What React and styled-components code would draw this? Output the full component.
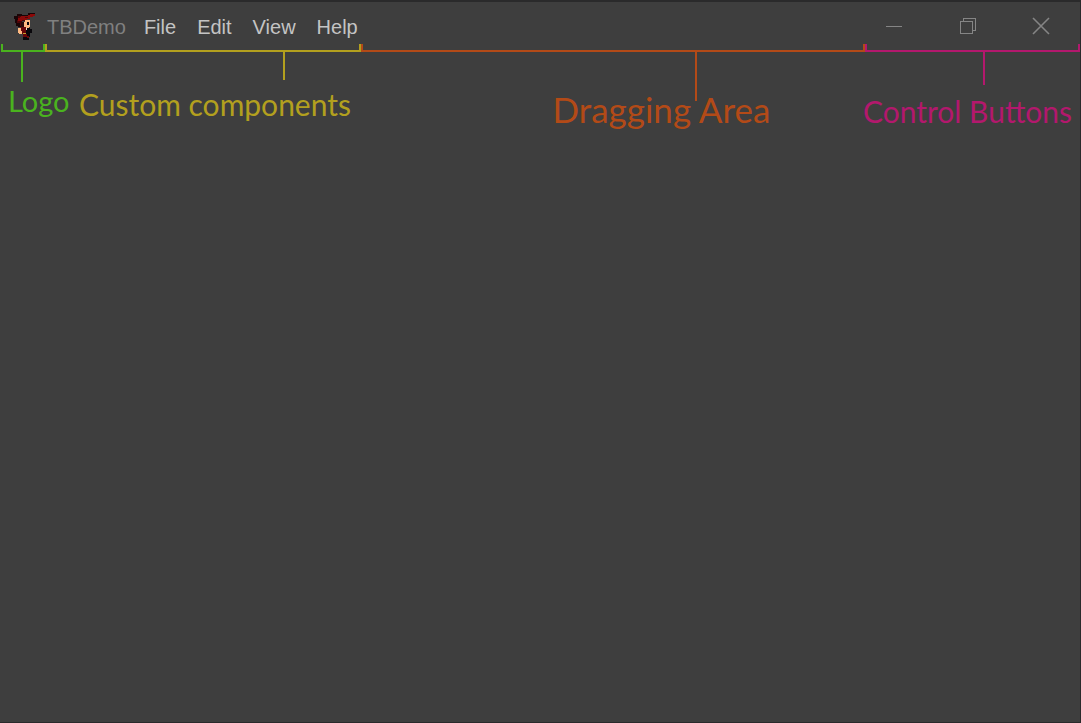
import React from "react";
import styled, { createGlobalStyle } from "styled-components";

const GlobalStyle = createGlobalStyle`
  * { box-sizing: border-box; }
  body { margin: 0; background: #3e3e3e; }
`;

const Window = styled.main`
  min-height: 100vh;
  background: #3e3e3e;
  border: solid #2a2a2b;
  border-width: 2px 1px 1px 0;
  font-family: "Liberation Sans", Arial, sans-serif;
`;

const zoneColumns = "44px 316px 1fr 215px";

const TitleBar = styled.header`
  display: grid;
  grid-template-columns: ${zoneColumns};
  height: 42px;
  padding-left: 1px;
  align-items: stretch;
`;

const LogoSlot = styled.div`
  display: flex;
  align-items: center;
  padding: 8px 0 0 13px;
`;

const Components = styled.div`
  display: flex;
  align-items: center;
  padding: 8px 0 0 2px;
  gap: 18px;
`;

const AppName = styled.span`
  font-size: 20px;
  line-height: 24px;
  color: #808080;
`;

const Menu = styled.nav`
  display: flex;
  gap: 21px;
`;

const MenuButton = styled.button`
  padding: 0;
  border: 0;
  background: none;
  font: inherit;
  font-size: 20px;
  line-height: 24px;
  color: #c4c4c4;
`;

const DragArea = styled.div``;

const Controls = styled.div`
  display: grid;
  grid-template-columns: repeat(3, 1fr);
  margin-left: -7px;
  margin-right: 2px;
`;

const ControlButton = styled.button`
  display: flex;
  align-items: center;
  justify-content: center;
  padding: 6px 0 0;
  border: 0;
  background: none;
  color: #858585;
`;

const Legend = styled.section`
  display: grid;
  grid-template-columns: ${zoneColumns};
  padding-left: 1px;
`;

const Zone = styled.div`
  color: ${(p) => p.$color};
`;

const Bracket = styled.div`
  height: 8px;
  border: 2px solid currentColor;
  border-top: 0;
`;

const Stem = styled.div`
  width: 2px;
  height: ${(p) => p.$length}px;
  margin-left: ${(p) => p.$at};
  background: currentColor;
`;

const Label = styled.p`
  margin: ${(p) => p.$gap}px 0 0 ${(p) => p.$indent};
  font-family: Lato, "Open Sans", sans-serif;
  font-size: ${(p) => p.$size}px;
  line-height: 32px;
  white-space: nowrap;
`;

const Sprite = () => (
  <svg width="22" height="28" viewBox="0 0 22 28" shapeRendering="crispEdges" role="img" aria-label="TBDemo logo">
    <path fill="#1a0507" d="M3 1h5v2h-5zM0 3h4v3h-4zM1 6h3v4h-3zM2 10h4v3h-4zM4 13h4v1h-4zM8 2h6v1h-6zM14 0h7v3h-7z" />
    <path fill="#4d0508" d="M4 3h5v4h-5zM3 7h5v3h-5zM6 10h3v3h-3z" />
    <path fill="#8b0909" d="M7 3h7v-1h2v-1h5v2h-2v1h-3v2h-3v1h-4v1h-5v-3h2z" />
    <path fill="#4d0508" d="M11 4h3v1h-3zM8 7h5v1h-5z" />
    <path fill="#2a0c0c" d="M7 9h3v5h-3z" />
    <path fill="#ffba82" d="M11 7h5v7h-1v1h-5v-6h1z" />
    <path fill="#0a0a12" d="M13 9h2v3h-2z" />
    <path fill="#680709" d="M7 14h5v7h-4v-3h-1z" />
    <path fill="#09070b" d="M12 15h4v1h2v4h-2v2h-4z" />
    <path fill="#ffba82" d="M4 15h3v3h1v3h-3v-1h-1z" />
    <path fill="#f4dccb" d="M12 15h1v2h-1z" />
    <path fill="#c5a12c" d="M9 20h3v1h-3z" />
    <path fill="#09070b" d="M9 22h7v2h-1v3h-6z" />
    <path fill="#680709" d="M9 21h4v3h-4zM13 23h2v2h-2z" />
  </svg>
);

const MinimizeIcon = () => (
  <svg width="18" height="18" viewBox="0 0 18 18" fill="none" stroke="currentColor" shapeRendering="crispEdges">
    <path d="M0 9.500h16" />
  </svg>
);

const RestoreIcon = () => (
  <svg width="18" height="18" viewBox="0 0 18 18" fill="none" stroke="currentColor" shapeRendering="crispEdges">
    <path d="M1.500 4.500h12v12h-12zM4.500 4V1.500h12v12H14" />
  </svg>
);

const CloseIcon = () => (
  <svg width="18" height="18" viewBox="0 0 18 18" fill="none" stroke="currentColor" strokeWidth="1.600">
    <path d="M1 1l16 16M17 1L1 17" />
  </svg>
);

const menus = ["File", "Edit", "View", "Help"];

const controls = [
  { name: "Minimize", Icon: MinimizeIcon },
  { name: "Restore", Icon: RestoreIcon },
  { name: "Close", Icon: CloseIcon },
];

const zones = [
  { text: "Logo", color: "#4ab31e", at: "20px", length: 30, indent: "7px", gap: 3, size: 29 },
  { text: "Custom components", color: "#b3a01e", at: "238px", length: 28, indent: "34px", gap: 8, size: 30 },
  { text: "Dragging Area", color: "#b34a17", at: "calc(66% + 1px)", length: 49, indent: "38%", gap: -8, size: 35 },
  { text: "Control Buttons", color: "#b3186d", at: "118px", length: 33, indent: "-2px", gap: 10, size: 30 },
];

export default function App() {
  return (
    <>
      <GlobalStyle />
      <Window>
        <TitleBar>
          <LogoSlot><Sprite /></LogoSlot>
          <Components>
            <AppName>TBDemo</AppName>
            <Menu>
              {menus.map((m) => <MenuButton key={m}>{m}</MenuButton>)}
            </Menu>
          </Components>
          <DragArea />
          <Controls>
            {controls.map(({ name, Icon }) => (
              <ControlButton key={name} aria-label={name}><Icon /></ControlButton>
            ))}
          </Controls>
        </TitleBar>
        <Legend>
          {zones.map((z) => (
            <Zone key={z.text} $color={z.color}>
              <Bracket />
              <Stem $at={z.at} $length={z.length} />
              <Label $indent={z.indent} $gap={z.gap} $size={z.size}>{z.text}</Label>
            </Zone>
          ))}
        </Legend>
      </Window>
    </>
  );
}
